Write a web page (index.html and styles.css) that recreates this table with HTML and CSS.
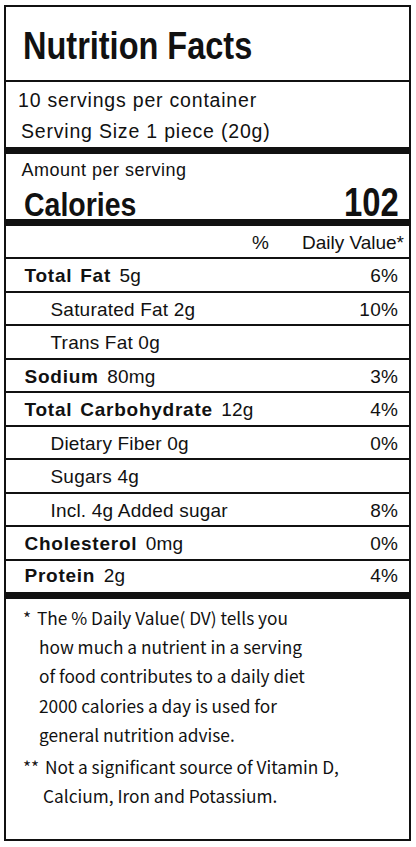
FILE: index.html
```html
<!DOCTYPE html>
<html>
<head>
<meta charset="utf-8">
<link rel="stylesheet" href="styles.css">
</head>
<body>
<div class="label">
  <div class="title-box"><h1 class="title">Nutrition Facts</h1></div>
  <div class="serving">
    <div class="serv-line first">10 servings per container</div>
    <div class="serv-line">Serving Size 1 piece (20g)</div>
  </div>
  <div class="amount">
    <div class="amount-label">Amount per serving</div>
    <div class="calories"><span class="cal-word">Calories</span><span class="cal-num">102</span></div>
  </div>
  <div class="dv-head"><span class="pct">%</span><span>Daily Value*</span></div>
  <div class="row"><span><b>Total Fat</b> 5g</span><span>6%</span></div>
  <div class="row sub"><span>Saturated Fat 2g</span><span>10%</span></div>
  <div class="row sub"><span>Trans Fat 0g</span><span></span></div>
  <div class="row"><span><b>Sodium</b> 80mg</span><span>3%</span></div>
  <div class="row"><span><b>Total Carbohydrate</b> 12g</span><span>4%</span></div>
  <div class="row sub"><span>Dietary Fiber 0g</span><span>0%</span></div>
  <div class="row sub"><span>Sugars 4g</span><span></span></div>
  <div class="row sub"><span>Incl. 4g Added sugar</span><span>8%</span></div>
  <div class="row"><span><b>Cholesterol</b> 0mg</span><span>0%</span></div>
  <div class="row last"><span><b>Protein</b> 2g</span><span>4%</span></div>
  <div class="foot">
    <div class="note"><span class="star">*</span><span class="note-text">The % Daily Value( DV) tells you<br>how much a nutrient in a serving<br>of food contributes to a daily diet<br>2000 calories a day is used for<br>general nutrition advise.</span></div>
    <div class="note two"><span class="star">**</span><span class="note-text">Not a significant source of Vitamin D,<br>Calcium, Iron and Potassium.</span></div>
  </div>
</div>
</body>
</html>
```
FILE: styles.css
```css
html, body {
  margin: 0;
  padding: 0;
  background: #fff;
}
body {
  font-family: "Liberation Sans", Arial, sans-serif;
  color: #111;
}
.label {
  margin: 5px 0 0 4px;
  width: 407px;
  height: 836px;
  box-sizing: border-box;
  border: 2.5px solid #111;
  display: flex;
  flex-direction: column;
}
.title-box {
  height: 75px;
  flex: none;
  border-bottom: 2.5px solid #111;
  display: flex;
  align-items: center;
  padding: 5px 0 0 17px;
  box-sizing: border-box;
}
.title {
  margin: 0;
  font-family: "Liberation Sans", sans-serif;
  font-weight: bold;
  font-size: 38px;
  transform: scaleX(0.855);
  transform-origin: left center;
  white-space: nowrap;
}
.serving {
  height: 72px;
  flex: none;
  box-sizing: border-box;
  border-bottom: 7px solid #111;
  padding: 3px 0 0 12px;
  font-size: 19.5px;
  letter-spacing: 0.8px;
}
.serv-line {
  height: 31px;
  line-height: 31px;
}
.serv-line + .serv-line {
  padding-left: 3px;
}
.amount {
  height: 72px;
  flex: none;
  box-sizing: border-box;
  border-bottom: 7px solid #111;
  padding: 4px 10px 0 15.5px;
}
.amount-label {
  font-size: 18px;
  letter-spacing: 0.5px;
  line-height: 24px;
}
.calories {
  display: flex;
  justify-content: space-between;
  align-items: baseline;
  font-weight: bold;
  line-height: 40px;
  padding-left: 2px;
}
.cal-word {
  display: inline-block;
  font-size: 33.5px;
  transform: scaleX(0.85);
  transform-origin: left center;
}
.cal-num {
  display: inline-block;
  font-size: 40px;
  transform: scaleX(0.82);
  transform-origin: right center;
}
.dv-head {
  height: 33px;
  flex: none;
  box-sizing: border-box;
  border-bottom: 2px solid #111;
  display: flex;
  justify-content: flex-end;
  align-items: center;
  padding: 2px 5px 0 0;
  font-size: 19px;
}
.pct {
  margin-right: 33px;
}
.row {
  height: 33.5px;
  flex: none;
  box-sizing: border-box;
  border-bottom: 2px solid #111;
  display: flex;
  justify-content: space-between;
  align-items: center;
  padding: 3px 11px 0 18.5px;
  font-size: 19px;
  letter-spacing: 0.2px;
}
.row b {
  letter-spacing: 0.75px;
  word-spacing: 2px;
  margin-right: 3px;
}
.row.sub {
  padding-left: 44.5px;
}
.row.last {
  border-bottom: 7px solid #111;
  height: 38.5px;
  padding-top: 0;
}
.foot {
  flex: 1;
  padding: 4px 0 0 17px;
  font-family: "Noto Sans CJK KR", "Noto Sans", sans-serif;
  font-size: 17.3px;
  line-height: 29.2px;
}
.note {
  display: flex;
}
.star {
  width: 14px;
  flex: none;
}
.note-text {
  padding-left: 2px;
  text-indent: -2px;
}
.note.two {
  margin-top: 3px;
}
.note.two .star {
  width: 20px;
  letter-spacing: 0;
}
.note.two .note-text {
  padding-left: 0;
  text-indent: 2px;
}
```
